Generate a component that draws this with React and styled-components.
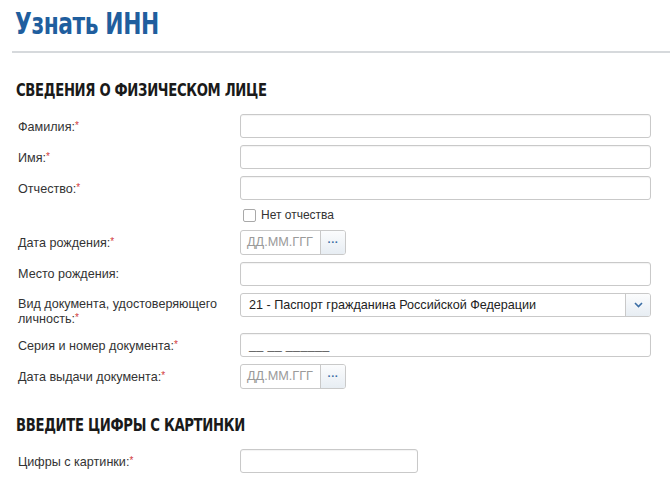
import React from 'react';
import styled, { createGlobalStyle } from 'styled-components';

const GlobalStyle = createGlobalStyle`
  body {
    margin: 0;
    background: #fff;
    font-family: "Liberation Sans", Arial, sans-serif;
  }
`;

const Page = styled.div`
  width: 670px;
  height: 485px;
  overflow: hidden;
  padding-top: 6px;
  box-sizing: border-box;
`;

// condensed display face: DejaVu Condensed narrowed a bit more
const Title = styled.h1`
  margin: 0 0 0 15px;
  display: inline-block;
  transform: scaleX(0.78);
  transform-origin: left center;
  font-family: "DejaVu Sans Condensed", sans-serif;
  font-weight: bold;
  font-size: 31px;
  line-height: 34px;
  letter-spacing: -0.5px;
  color: #1f5e9e;
`;

const Rule = styled.hr`
  margin: 11px 0 0 12px;
  border: 0;
  border-top: 2px solid #d6d9dc;
`;

const SectionTitle = styled.h2`
  margin: ${p => p.$top}px 0 0 16px;
  display: inline-block;
  transform: scaleX(0.815);
  transform-origin: left center;
  font-family: "DejaVu Sans Condensed", sans-serif;
  font-weight: bold;
  font-size: 18px;
  line-height: 22px;
  letter-spacing: -0.4px;
  color: #1a1a1a;
`;

const Form = styled.div`
  display: grid;
  grid-template-columns: 222px 411px;
  row-gap: 7px;
  margin: ${p => p.$top}px 0 0 18px;
  align-items: start;
`;

const Label = styled.label`
  font-size: 12.6px;
  line-height: 14px;
  color: #333;
  padding-top: ${p => (p.$tall ? 4 : 5)}px;
  padding-right: 10px;
`;

const Req = styled.span`
  color: #d23a3a;
  font-size: 10px;
  vertical-align: 2px;
`;

const Input = styled.div`
  box-sizing: border-box;
  height: 24px;
  width: ${p => p.$w || '100%'};
  border: 1px solid #c9c9c9;
  border-radius: 3px;
  background: #fff;
  box-shadow: inset 0 1px 1px rgba(0, 0, 0, 0.05);
  font-size: 12.6px;
  line-height: 22px;
  padding: 0 8px;
  color: #333;
`;

const Mask = styled.span`
  color: #555;
  letter-spacing: 0.3px;
`;

const CheckRow = styled.div`
  grid-column: 2;
  display: flex;
  align-items: center;
  height: 16px;
  gap: 5px;
  padding-left: 3px;
  font-size: 12px;
  color: #333;
`;

const Box = styled.span`
  width: 11px;
  height: 11px;
  border: 1px solid #a9a9a9;
  border-radius: 2px;
  background: #fff;
`;

const DateGroup = styled.div`
  display: flex;
  height: 25px;
  width: 106px;
  box-sizing: border-box;
  border: 1px solid #c9c9c9;
  border-radius: 3px;
  overflow: hidden;
`;

const DateText = styled.div`
  flex: 1;
  font-size: 12.7px;
  line-height: 23px;
  padding-left: 6px;
  color: #9a9a9a;
`;

const SideButton = styled.div`
  width: ${p => p.$w}px;
  border-left: 1px solid #c9c9c9;
  background: linear-gradient(#fbfcfd, #e7edf3);
  display: flex;
  align-items: center;
  justify-content: center;
  color: #3b6ea5;
  font-size: 11px;
  font-weight: bold;
  line-height: 1;
`;

const Select = styled.div`
  display: flex;
  height: 24px;
  box-sizing: border-box;
  border: 1px solid #c9c9c9;
  border-radius: 3px;
  overflow: hidden;
`;

const SelectText = styled.div`
  flex: 1;
  font-size: 12.6px;
  line-height: 22px;
  padding-left: 8px;
  color: #222;
`;

function Field({ label, required, tall, children }) {
  return (
    <>
      <Label $tall={tall}>
        {label}
        {required && <Req>*</Req>}
      </Label>
      {children}
    </>
  );
}

function DateInput() {
  return (
    <DateGroup>
      <DateText>ДД.ММ.ГГГ</DateText>
      <SideButton $w={24}>···</SideButton>
    </DateGroup>
  );
}

export default function App() {
  return (
    <Page>
      <GlobalStyle />
      <Title>Узнать ИНН</Title>
      <Rule />
      <SectionTitle $top={26}>СВЕДЕНИЯ О ФИЗИЧЕСКОМ ЛИЦЕ</SectionTitle>
      <Form $top={13}>
        <Field label="Фамилия:" required><Input /></Field>
        <Field label="Имя:" required><Input /></Field>
        <Field label="Отчество:" required><Input /></Field>
        <CheckRow><Box />Нет отчества</CheckRow>
        <Field label="Дата рождения:" required><DateInput /></Field>
        <Field label="Место рождения:"><Input /></Field>
        <Field label="Вид документа, удостоверяющего личность:" required tall>
          <Select>
            <SelectText>21 - Паспорт гражданина Российской Федерации</SelectText>
            <SideButton $w={24}>
              <svg width="9" height="6" viewBox="0 0 9 6">
                <path d="M1 1l3.5 3.5L8 1" fill="none" stroke="#3b6ea5" strokeWidth="1.6" />
              </svg>
            </SideButton>
          </Select>
        </Field>
        <Field label="Серия и номер документа:" required>
          <Input><Mask>__ __ ______</Mask></Input>
        </Field>
        <Field label="Дата выдачи документа:" required><DateInput /></Field>
      </Form>
      <SectionTitle $top={25}>ВВЕДИТЕ ЦИФРЫ С КАРТИНКИ</SectionTitle>
      <Form $top={13}>
        <Field label="Цифры с картинки:" required><Input $w="178px" /></Field>
      </Form>
    </Page>
  );
}
